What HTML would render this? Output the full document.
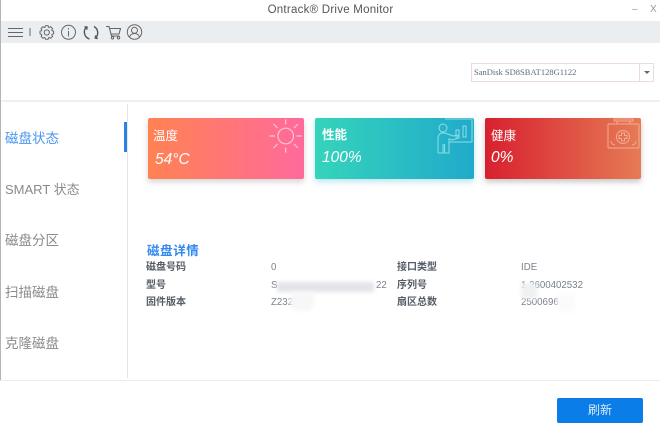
<!DOCTYPE html>
<html>
<head>
<meta charset="utf-8">
<style>
html,body{margin:0;padding:0;background:#fff}
body{width:660px;height:431px;position:relative;overflow:hidden;font-family:"Liberation Sans","Noto Sans CJK SC",sans-serif}
.a{position:absolute;white-space:nowrap}
.nav{left:5px;font-size:13.500px;line-height:18px;color:#8a8a8a}
.card{position:absolute;top:118px;height:61px;border-radius:2px;color:#fff}
.t{position:absolute;left:5px;top:10px;font-size:12.500px;line-height:16px}
.v{position:absolute;left:7px;top:33px;font-size:15.500px;line-height:18px;font-style:italic}
.k{font-size:10px;line-height:12px;color:#555d66;font-weight:700}
.d{font-size:9.700px;line-height:12px;color:#7b838c}
.blur{position:absolute;filter:blur(2px);background:#e2e4e8}
</style>
</head>
<body>
<div class="a" style="left:0;top:0;width:1px;height:381px;background:#b4b4b4"></div>
<div class="a" style="left:0;top:3px;width:661px;text-align:center;font-size:11.500px;line-height:15px;color:#555;letter-spacing:.25px">Ontrack® Drive Monitor</div>
<div class="a" style="left:632px;top:3px;font-size:10px;line-height:14px;color:#999">–</div>
<div class="a" style="left:650px;top:3px;font-size:10px;line-height:14px;color:#999">X</div>

<div class="a" style="left:1px;top:21px;width:659px;height:22px;background:#ebeef1"></div>
<svg class="a" style="left:0;top:20px" width="150" height="25" viewBox="0 0 150 25" fill="none" stroke="#666" stroke-width="1">
  <path d="M8 8.500H23M8 12.500H23M8 16.500H23"/>
  <path d="M30 8V16"/>
  <circle cx="46.800" cy="12.500" r="2.600"/>
  <g transform="translate(46.800 12.500)">
    <path d="M-1.990 -4.800L-1.300 -6.800H1.300L1.990 -4.800"/>
    <path transform="rotate(45)" d="M-1.990 -4.800L-1.300 -6.800H1.300L1.990 -4.800"/>
    <path transform="rotate(90)" d="M-1.990 -4.800L-1.300 -6.800H1.300L1.990 -4.800"/>
    <path transform="rotate(135)" d="M-1.990 -4.800L-1.300 -6.800H1.300L1.990 -4.800"/>
    <path transform="rotate(180)" d="M-1.990 -4.800L-1.300 -6.800H1.300L1.990 -4.800"/>
    <path transform="rotate(225)" d="M-1.990 -4.800L-1.300 -6.800H1.300L1.990 -4.800"/>
    <path transform="rotate(270)" d="M-1.990 -4.800L-1.300 -6.800H1.300L1.990 -4.800"/>
    <path transform="rotate(315)" d="M-1.990 -4.800L-1.300 -6.800H1.300L1.990 -4.800"/>
  </g>
  <circle cx="68.500" cy="12.300" r="7"/>
  <path d="M68.500 11V16.500M68.500 8V9.500"/>
  <path d="M86.500 7A7.200 7.200 0 0 0 89.500 19M84.500 6.800l2.500.2-.2 2.700M94 6.500A7.200 7.200 0 0 1 95.500 18M97.800 18.500l-2.500-.4.4-2.600" stroke-width="1.400" stroke="#555"/>
  <path d="M106 6.500h3l2.500 9.500h8M110 8.500h10.500l-1.500 5.500h-8" stroke-width="1.100"/>
  <circle cx="112.500" cy="17.800" r="1.200"/><circle cx="118.500" cy="17.800" r="1.200"/>
  <circle cx="134.500" cy="12" r="7.200"/>
  <circle cx="134.500" cy="10.300" r="3"/>
  <path d="M129.500 17c1-3 3-3.500 5-3.500s4 .5 5 3.500"/>
</svg>

<div class="a" style="left:471px;top:63px;width:181px;height:17px;border:1px solid #ead9e8;box-sizing:content-box;background:#fff"></div>
<div class="a" style="left:639px;top:64px;width:1px;height:17px;background:#ead9e8"></div>
<div class="a" style="left:474px;top:66px;font-family:'Liberation Serif','DejaVu Serif',serif;font-size:8.500px;line-height:12px;color:#5c6a7a">SanDisk SD8SBAT128G1122</div>
<div class="a" style="left:644px;top:71px;width:0;height:0;border-left:3px solid transparent;border-right:3px solid transparent;border-top:3px solid #666"></div>

<div class="a" style="left:1px;top:100px;width:659px;height:2px;background:#f0f0f0"></div>
<div class="a" style="left:127px;top:104px;width:1px;height:274px;background:#e6e6e6"></div>
<div class="a" style="left:124px;top:122px;width:3px;height:30px;background:#2a82e4"></div>

<div class="a nav" style="top:130px;color:#4a96ee">磁盘状态</div>
<div class="a nav" style="top:181px;font-size:13px">SMART 状态</div>
<div class="a nav" style="top:232px">磁盘分区</div>
<div class="a nav" style="top:284px">扫描磁盘</div>
<div class="a nav" style="top:335px">克隆磁盘</div>

<div class="card" style="left:148px;width:156px;background:linear-gradient(90deg,#ff8252,#ff6a9c);box-shadow:0 3px 6px rgba(150,150,150,.4)">
  <div class="t">温度</div><div class="v">54°C</div>
  <svg style="position:absolute;left:120px;top:0" width="36" height="40" fill="none" stroke="#ffc6d4" stroke-width="1.200">
    <circle cx="17.700" cy="18" r="7.800"/>
    <path d="M17.700 1.500V6.500M17.700 29.500V34.500M1.500 18H7M28.500 18H34M5.500 6L9.500 10M26 26L30 30M30 6L26 10M9.500 26L5.500 30"/>
  </svg>
</div>
<div class="card" style="left:315px;width:159px;background:linear-gradient(90deg,#35d4bb,#20aacb);box-shadow:0 3px 6px rgba(110,200,220,.45)">
  <div class="t" style="font-weight:700;top:9px;left:7px">性能</div><div class="v" style="top:31px">100%</div>
  <svg style="position:absolute;left:119px;top:0" width="40" height="40" fill="none" stroke="#8fdfe3" stroke-width="1">
    <circle cx="9" cy="10" r="4"/>
    <path d="M11 1H38V24H15M4 35V21C4 17 6 15 8 15H11L19 18 25 17V20L18 22 15 21V35H10.500V26M9 26V35H4"/>
    <path d="M22 12h3v7h-3zM29 8h3v11h-3z"/>
  </svg>
</div>
<div class="card" style="left:485px;width:156px;background:linear-gradient(90deg,#d8202f,#e67b55);box-shadow:0 3px 6px rgba(130,130,130,.45)">
  <div class="t" style="left:6px">健康</div><div class="v" style="left:6px;top:31px">0%</div>
  <svg style="position:absolute;left:120px;top:0" width="36" height="40" fill="none" stroke="#f4ab95" stroke-width="1">
    <rect x="3" y="6" width="31" height="24" rx="1"/>
    <path d="M12 6V3H25V6M9 1H28V3H9z"/>
    <circle cx="18" cy="19" r="6.500"/>
    <path d="M16.500 15h3v2.500h2.500v3h-2.500v2.500h-3v-2.500h-2.500v-3h2.500z"/>
    <path d="M6 23a4 4 0 0 0 4 4M31 23a4 4 0 0 1-4 4"/>
  </svg>
</div>

<div class="a" style="left:147px;top:244px;font-size:12.500px;line-height:15px;color:#3188ee;font-weight:700;letter-spacing:.6px">磁盘详情</div>

<div class="a k" style="left:146px;top:262px">磁盘号码</div>
<div class="a k" style="left:146px;top:280px">型号</div>
<div class="a k" style="left:146px;top:297px">固件版本</div>
<div class="a d" style="left:271px;top:262px">0</div>
<div class="a d" style="left:271px;top:280px">S</div>
<div class="a d" style="left:376px;top:280px">22</div>
<div class="a d" style="left:271px;top:297px">Z232</div>
<div class="a k" style="left:397px;top:262px">接口类型</div>
<div class="a k" style="left:397px;top:280px">序列号</div>
<div class="a k" style="left:397px;top:297px">扇区总数</div>
<div class="a d" style="left:521px;top:262px">IDE</div>
<div class="a d" style="left:521px;top:280px">1 2600402532</div>
<div class="a d" style="left:521px;top:297px">2500696</div>

<div class="blur" style="left:277px;top:282px;width:97px;height:10px"></div>
<div class="a" style="left:290px;top:293px;width:24px;height:18px;background:#f7f7f8;filter:blur(2px);border-radius:0 0 8px 8px"></div>
<div class="a" style="left:521px;top:283px;width:16px;height:16px;background:#eef0f2;filter:blur(2px)"></div>
<div class="a" style="left:557px;top:294px;width:18px;height:18px;background:#fbfbfb;filter:blur(2px)"></div>

<div class="a" style="left:0;top:380px;width:660px;height:1px;background:#ececec"></div>
<div class="a" style="left:557px;top:398px;width:86px;height:25px;background:#0a7de8;border-radius:2px;color:#dcebfb;font-size:12px;line-height:24px;text-align:center">刷新</div>
</body>
</html>
